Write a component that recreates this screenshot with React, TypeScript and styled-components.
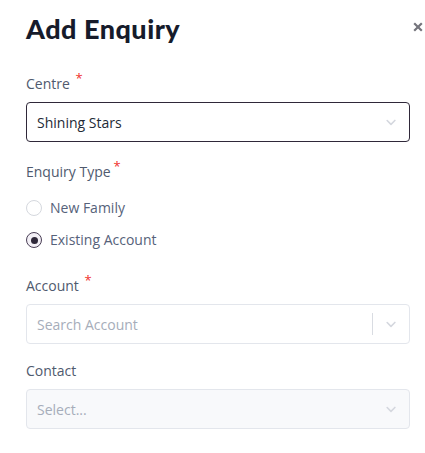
import styled, { createGlobalStyle } from "styled-components";

const GlobalStyle = createGlobalStyle`
  body {
    margin: 0;
    background: #fff;
    font-family: "Open Sans", "Liberation Sans", sans-serif;
  }
`;

const Chevron = () => (
  <svg width="16" height="16" viewBox="0 0 20 20" fill="#d4d7de">
    <path d="M4.5 7.5a1 1 0 0 1 1.4 0L10 11.6l4.1-4.1a1 1 0 1 1 1.4 1.4l-4.8 4.8a1 1 0 0 1-1.4 0L4.5 8.9a1 1 0 0 1 0-1.4z" />
  </svg>
);

export default function App() {
  return (
    <>
      <GlobalStyle />
      <Panel>
        <Header>
          <Title>Add Enquiry</Title>
          <Close aria-label="close">
            <svg width="10" height="10" viewBox="0 0 10 10">
              <path d="M1.2 1.2l7.6 7.6M8.8 1.2l-7.6 7.6" stroke="#74747c" strokeWidth="2.2" />
            </svg>
          </Close>
        </Header>

        <Field>
          <Label>
            Centre <Star $gap={6}>*</Star>
          </Label>
          <SelectBox $focused>
            <Value>Shining Stars</Value>
            <Indicators>
              <Chevron />
            </Indicators>
          </SelectBox>
        </Field>

        <Field>
          <Label>
            Enquiry Type<Star $gap={7}>*</Star>
          </Label>
          <RadioList>
            <RadioRow>
              <RadioDot />
              New Family
            </RadioRow>
            <RadioRow>
              <RadioDot $checked />
              Existing Account
            </RadioRow>
          </RadioList>
        </Field>

        <Field $tight>
          <Label>
            Account <Star $gap={6}>*</Star>
          </Label>
          <SelectBox>
            <Placeholder>Search Account</Placeholder>
            <Indicators>
              <Separator />
              <Chevron />
            </Indicators>
          </SelectBox>
        </Field>

        <Field>
          <Label>Contact</Label>
          <SelectBox $disabled>
            <Placeholder>Select...</Placeholder>
            <Indicators>
              <Chevron />
            </Indicators>
          </SelectBox>
        </Field>
      </Panel>
    </>
  );
}

const Panel = styled.div`
  width: 425px;
  height: 453px;
  box-sizing: border-box;
  padding: 11px 2px 0 26px;
  display: flex;
  flex-direction: column;
`;

const Header = styled.div`
  display: flex;
  align-items: center;
  justify-content: space-between;
  margin-bottom: 27px;
`;

const Title = styled.h1`
  margin: 0;
  font-family: "Lato", "Liberation Sans", sans-serif;
  font-weight: 900;
  font-size: 27px;
  line-height: 36px;
  color: #161b2b;
  letter-spacing: 0.5px;
`;

const Close = styled.button`
  border: 0;
  background: none;
  padding: 0;
  margin-bottom: 4px;
  display: flex;
  cursor: pointer;
`;

const Field = styled.div<{ $tight?: boolean }>`
  display: flex;
  flex-direction: column;
  margin-bottom: ${(p) => (p.$tight ? 17 : 20)}px;
`;

const Label = styled.div`
  font-size: 14px;
  line-height: 20px;
  color: #4f5a6e;
  margin-bottom: 8px;
`;

const Star = styled.span<{ $gap: number }>`
  color: #f0302c;
  margin-left: ${(p) => p.$gap - 4}px;
  position: relative;
  top: -6px;
  font-size: 13px;
`;

const SelectBox = styled.div<{ $focused?: boolean; $disabled?: boolean }>`
  width: 384px;
  height: 40px;
  box-sizing: border-box;
  border: 1px solid ${(p) => (p.$focused ? "#2f2839" : "#e3e6ec")};
  border-radius: 4px;
  background: ${(p) => (p.$disabled ? "#f8f9fb" : "#fff")};
  display: flex;
  align-items: center;
  padding-left: 10px;
`;

const Value = styled.span`
  flex: 1;
  font-size: 14px;
  color: #232a36;
`;

const Placeholder = styled(Value)`
  color: #a6adba;
`;

const Indicators = styled.div`
  display: flex;
  align-items: center;
  height: 100%;
  padding-right: 10px;
  gap: 10px;
`;

const Separator = styled.span`
  width: 1px;
  height: 22px;
  background: #d9dce2;
`;

const RadioList = styled.div`
  display: flex;
  flex-direction: column;
  gap: 12px;
  margin: 8px 0 6px;
`;

const RadioRow = styled.label`
  display: flex;
  align-items: center;
  gap: 8px;
  font-size: 14px;
  line-height: 20px;
  color: #56627a;
`;

const RadioDot = styled.span<{ $checked?: boolean }>`
  width: 16px;
  height: 16px;
  box-sizing: border-box;
  border-radius: 50%;
  border: ${(p) => (p.$checked ? "1.5px solid #4a3f56" : "1px solid #d5d8de")};
  background: ${(p) => (p.$checked ? "#f3f0f6" : "#fff")};
  display: flex;
  align-items: center;
  justify-content: center;
  &::after {
    content: "";
    width: 7px;
    height: 7px;
    border-radius: 50%;
    background: #2f2839;
    display: ${(p) => (p.$checked ? "block" : "none")};
  }
`;
